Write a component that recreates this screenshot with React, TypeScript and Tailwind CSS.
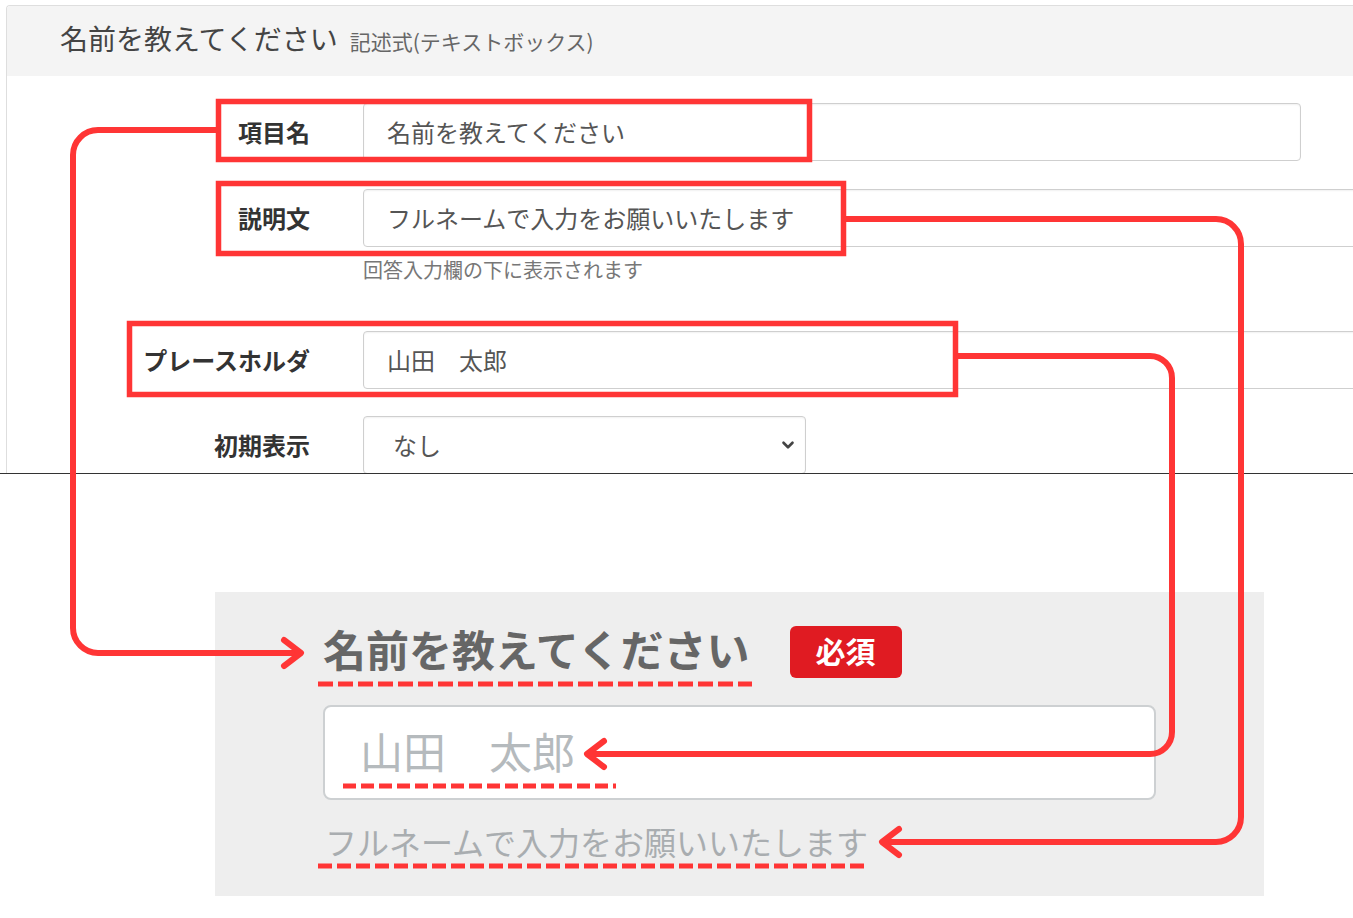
import React from 'react';
import { ChevronDown } from 'lucide-react';

const RED = '#ff3535';

const Field = ({ children, className = '' }: { children?: React.ReactNode; className?: string }) => (
  <div
    className={`h-[58px] shrink-0 flex items-center pl-[23px] border border-[#cfcfcf] rounded-[4px] bg-white shadow-[inset_0_1px_2px_rgba(0,0,0,0.06)] text-[24px] text-[#555] ${className}`}
  >
    {children}
  </div>
);

const Row = ({ label, children }: { label: string; children: React.ReactNode }) => (
  <div className="flex items-center">
    <div className="w-[304px] shrink-0 pr-[1px] text-right text-[24px] font-bold text-[#333]">{label}</div>
    <div className="ml-[52px] flex">{children}</div>
  </div>
);

const Annotations = () => (
  <svg className="absolute inset-0 pointer-events-none" width="1353" height="918" viewBox="0 0 1353 918" fill="none">
    {/* boxes around the editor rows */}
    <rect x="218.5" y="101.5" width="591" height="58" stroke={RED} strokeWidth="5.5" />
    <rect x="218.5" y="183.5" width="625" height="70" stroke={RED} strokeWidth="5.5" />
    <rect x="129.5" y="323.5" width="826" height="71" stroke={RED} strokeWidth="5.5" />

    {/* arrows */}
    <g stroke={RED} strokeWidth="6" strokeLinecap="round" strokeLinejoin="round">
      <path d="M216 130 H98 A25 25 0 0 0 73 155 V628 A25 25 0 0 0 98 653 H298" />
      <path d="M284 640 L301 653 L284 666" />
      <path d="M846 219 H1216 A25 25 0 0 1 1241 244 V817 A25 25 0 0 1 1216 842 H884" />
      <path d="M899 829 L882 842 L899 855" />
      <path d="M958 356 H1150 A22 22 0 0 1 1172 378 V732 A22 22 0 0 1 1150 754 H590" />
      <path d="M604 741 L587 754 L604 767" />
    </g>

    {/* dashed underlines in the preview */}
    <g stroke={RED} strokeWidth="5">
      <line x1="318" y1="684" x2="752" y2="684" strokeDasharray="15 5" />
      <line x1="343" y1="786" x2="616" y2="786" strokeDasharray="13 5" />
      <line x1="318" y1="866" x2="869" y2="866" strokeDasharray="14 5" />
    </g>
  </svg>
);

export default function App() {
  return (
    <div
      className="relative w-[1353px] h-[918px] overflow-hidden bg-white"
      style={{ fontFamily: '"Noto Sans CJK JP", "Noto Sans", sans-serif' }}
    >
      {/* editor panel */}
      <div className="h-[473px] pt-[5px] overflow-hidden">
        <div className="ml-[6px] h-[468px] border-l border-t border-[#dedede] rounded-tl-[4px] overflow-hidden">
          <div className="h-[70px] bg-[#f4f4f4] flex items-center pl-[53px] pb-[6px]">
            <span className="text-[28px] leading-none text-[#444]">名前を教えてください</span>
            <span className="ml-[12px] mt-[6px] text-[21px] leading-none text-[#666]">
              記述式(テキストボックス)
            </span>
          </div>

          <div className="pt-[27px] flex flex-col">
            <Row label="項目名">
              <Field className="w-[938px]">名前を教えてください</Field>
            </Row>
            <div className="mt-[28px]">
              <Row label="説明文">
                <Field className="w-[1100px]">フルネームで入力をお願いいたします</Field>
              </Row>
            </div>
            <div className="ml-[356px] mt-[9px] h-[28px] leading-[28px] text-[20px] text-[#777]">
              回答入力欄の下に表示されます
            </div>
            <div className="mt-[47px]">
              <Row label="プレースホルダ">
                <Field className="w-[1100px]">山田　太郎</Field>
              </Row>
            </div>
            <div className="mt-[27px]">
              <Row label="初期表示">
                <Field className="w-[443px] pl-[29px] justify-between pr-[8px]">
                  <span>なし</span>
                  <ChevronDown size={18} strokeWidth={3.5} color="#444" />
                </Field>
              </Row>
            </div>
          </div>
        </div>
      </div>
      <div className="h-px bg-[#333]" />

      {/* preview */}
      <div className="ml-[215px] mt-[118px] w-[1049px] h-[304px] bg-[#eeeeee] pl-[108px] pt-[34px]">
        <div className="flex items-center h-[52px]">
          <span className="pb-[8px] text-[43px] leading-[52px] font-bold text-[#666]">名前を教えてください</span>
          <span className="ml-[40px] w-[112px] h-[52px] pb-[4px] rounded-[6px] bg-[#e01b22] text-white text-[30px] font-bold flex items-center justify-center">
            必須
          </span>
        </div>
        <div className="mt-[27px] w-[833px] h-[95px] bg-white border-2 border-[#cdd0d2] rounded-[8px] flex items-center pl-[35px]">
          <span className="pb-[4px] text-[43px] leading-none text-[#b5babd]">山田　太郎</span>
        </div>
        <div className="mt-[21px] ml-[2px] text-[32px] leading-[40px] text-[#a9adb0]">
          フルネームで入力をお願いいたします
        </div>
      </div>

      <Annotations />
    </div>
  );
}
